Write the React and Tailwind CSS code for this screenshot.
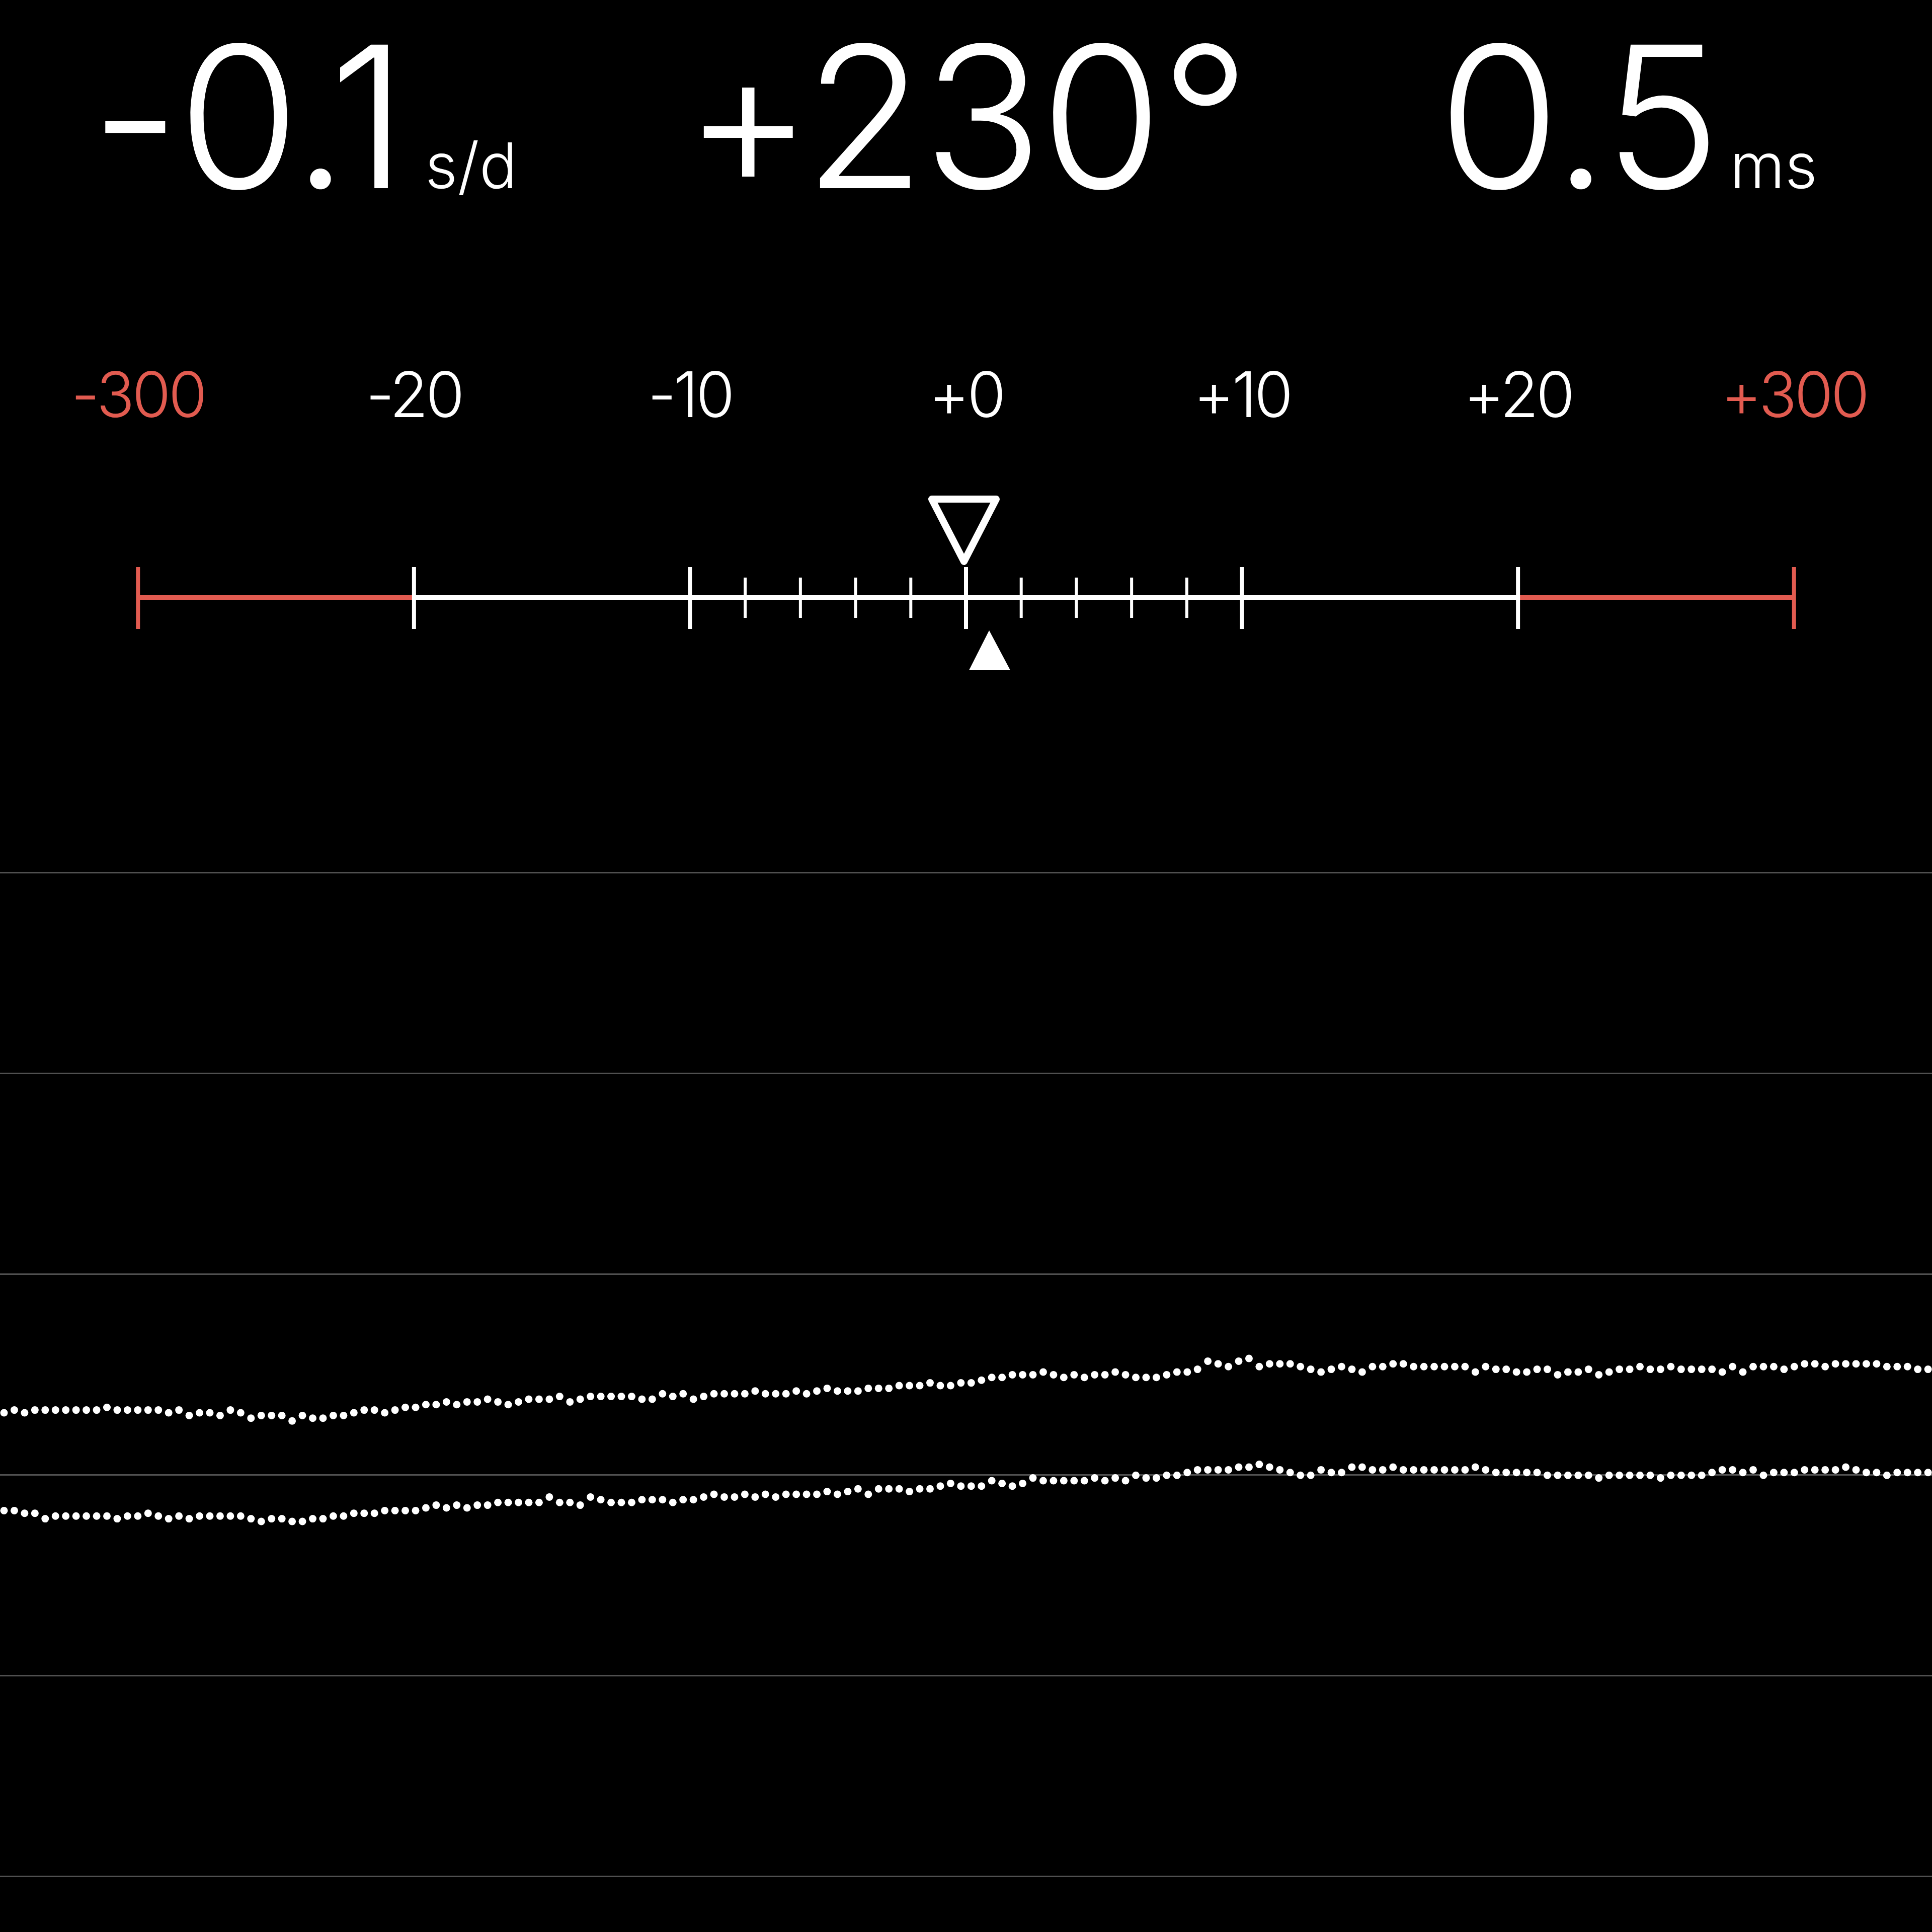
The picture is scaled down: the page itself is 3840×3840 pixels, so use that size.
import React from "react";

const W = 3840;
const COL = W / 7;
const RED = "#e25b50";

const upperPts = [
  [0, 2806], [245, 2803], [490, 2810], [560, 2818], [612, 2822], [700, 2810], [857, 2793],
  [980, 2785], [1225, 2776], [1470, 2772], [1600, 2766], [1715, 2762], [1837, 2754], [1960, 2745],
  [2033, 2730], [2204, 2730], [2300, 2737], [2409, 2711], [2471, 2707], [2553, 2711], [2640, 2727],
  [2757, 2713], [2940, 2722], [3062, 2727], [3184, 2726], [3306, 2720], [3429, 2723], [3551, 2720],
  [3625, 2711], [3723, 2711], [3840, 2724],
];
const lowerPts = [
  [0, 3008], [245, 3015], [367, 3012], [612, 3025], [735, 3007], [857, 2998], [980, 2988],
  [1102, 2988], [1225, 2978], [1347, 2984], [1470, 2973], [1592, 2968], [1715, 2963], [1837, 2958],
  [1960, 2951], [2082, 2941], [2204, 2939], [2327, 2934], [2440, 2921], [2502, 2912], [2563, 2926],
  [2603, 2935], [2700, 2922], [2800, 2921], [2940, 2922], [3086, 2933], [3184, 2931], [3429, 2929],
  [3674, 2921], [3840, 2928],
];

function interp(pts, x) {
  for (let i = 0; i < pts.length - 1; i++) {
    const [x0, y0] = pts[i];
    const [x1, y1] = pts[i + 1];
    if (x >= x0 && x <= x1) return y0 + ((y1 - y0) * (x - x0)) / (x1 - x0);
  }
  return pts[pts.length - 1][1];
}

function hash(i, s) {
  const v = Math.sin(i * 12.9898 + s * 78.233) * 43758.5453;
  return v - Math.floor(v);
}

function makeDots(pts, seed) {
  const out = [];
  const step = 5.4;
  for (let i = 0; i < 190; i++) {
    const x = 8 + i * 20.45;
    if (x > W + 6) break;
    const h = hash(i, seed);
    let j = 0;
    if (h < 0.18) j = -step;
    else if (h > 0.85) j = step;
    if (hash(i, seed + 7) > 0.96) j -= step;
    const y = Math.round((interp(pts, x) + j) / step) * step;
    out.push([x, y]);
  }
  return out;
}

const upperDots = makeDots(upperPts, 1);
const lowerDots = makeDots(lowerPts, 2);

const labels = [
  { t: "-300", red: true },
  { t: "-20" },
  { t: "-10" },
  { t: "+0" },
  { t: "+10" },
  { t: "+20" },
  { t: "+300", red: true },
];

function Gauge() {
  const major = [0, 1, 2, 3, 4, 5, 6].map((k) => (k + 0.5) * COL);
  const minorStep = COL / 5;
  const minor = [];
  for (let k = 1; k < 10; k++) {
    if (k === 5) continue;
    minor.push(2.5 * COL + k * minorStep);
  }
  return (
    <svg className="block mt-[124px]" width={W} height={380} viewBox={`0 0 ${W} 380`}>
      <line x1={major[0]} y1={218} x2={major[1]} y2={218} stroke={RED} strokeWidth={10} />
      <line x1={major[1]} y1={218} x2={major[5]} y2={218} stroke="#fff" strokeWidth={10} />
      <line x1={major[5]} y1={218} x2={major[6]} y2={218} stroke={RED} strokeWidth={10} />
      {major.map((x, i) => (
        <line
          key={"M" + i}
          x1={x}
          y1={157}
          x2={x}
          y2={280}
          stroke={i === 0 || i === 6 ? RED : "#fff"}
          strokeWidth={8}
        />
      ))}
      {minor.map((x, i) => (
        <line key={"m" + i} x1={x} y1={178} x2={x} y2={258} stroke="#fff" strokeWidth={6} />
      ))}
      <polygon
        points="1852,22 1980,22 1916,146"
        fill="none"
        stroke="#fff"
        strokeWidth={14}
        strokeLinejoin="round"
      />
      <polygon points="1926,362 2008,362 1966,283" fill="#fff" />
    </svg>
  );
}

export default function App() {
  const font = { fontFamily: "Inter, 'Helvetica Neue', Arial, sans-serif" };
  return (
    <div className="w-[3840px] h-[3840px] bg-black text-white font-light" style={font}>
      <div className="grid grid-cols-3 pt-[36px]">
        <div className="flex items-baseline justify-start pl-[180px]">
          <span className="text-[392px] leading-none tracking-[-4px]">-0.1</span>
          <span className="text-[125px] leading-none ml-[40px]">s/d</span>
        </div>
        <div className="flex items-baseline justify-center">
          <span className="text-[392px] leading-none tracking-[-4px]">+230°</span>
        </div>
        <div className="flex items-baseline justify-end pr-[228px]">
          <span className="text-[392px] leading-none tracking-[-4px]">0.5</span>
          <span className="text-[125px] leading-none ml-[22px]">ms</span>
        </div>
      </div>

      <div className="grid grid-cols-7 mt-[293px]">
        {labels.map((l) => (
          <div
            key={l.t}
            className={
              "text-center text-[125px] leading-none tracking-[-5px] " +
              (l.red ? "text-[#e25b50]" : "text-white")
            }
          >
            {l.t}
          </div>
        ))}
      </div>

      <Gauge />

      <div className="relative h-[2490px]">
        <div className="flex flex-col gap-[396px] pt-[383px]">
          <div className="h-[3px] bg-[#505050]" />
          <div className="h-[3px] bg-[#505050]" />
          <div className="h-[3px] bg-[#505050]" />
          <div className="h-[3px] bg-[#505050]" />
          <div className="h-[3px] bg-[#505050]" />
          <div className="h-[3px] bg-[#505050]" />
        </div>
        <svg className="absolute inset-0" width={W} height={2490} viewBox={`0 1350 ${W} 2490`}>
          {upperDots.map(([x, y], i) => (
            <circle key={"u" + i} cx={x} cy={y} r={7.5} fill="#fff" />
          ))}
          {lowerDots.map(([x, y], i) => (
            <circle key={"l" + i} cx={x} cy={y} r={7.5} fill="#fff" />
          ))}
        </svg>
      </div>
    </div>
  );
}
